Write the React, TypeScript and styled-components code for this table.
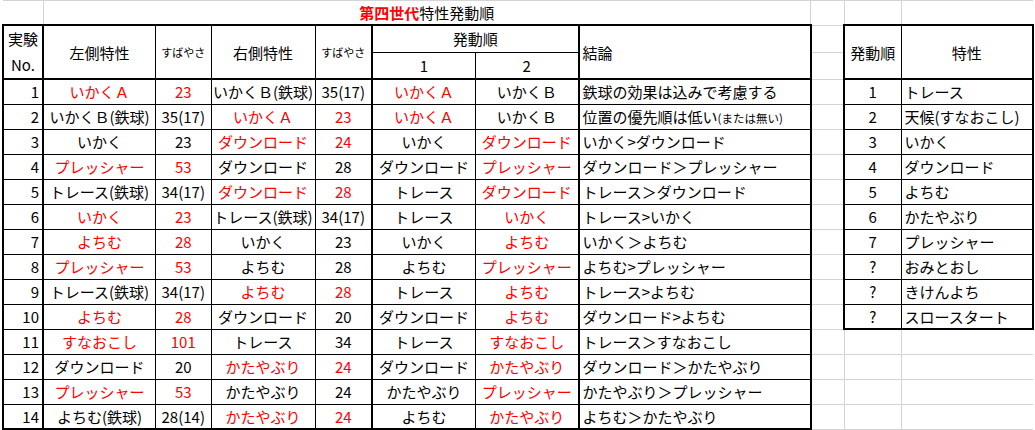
import React from "react";
import styled, { createGlobalStyle } from "styled-components";

const GlobalStyle = createGlobalStyle`
  html, body {
    margin: 0;
    padding: 0;
    background: #ffffff;
  }
  body {
    font-family: "Noto Sans CJK JP", "Noto Sans", sans-serif;
    color: #000000;
  }
`;

type Edge = "thick" | "thin" | "grid" | "none";

const edge = (e: Edge = "thin") => {
  if (e === "thick") return "2px solid #000000";
  if (e === "grid") return "1px solid #d4d4d4";
  if (e === "none") return "none";
  return "1px solid #000000";
};

const Sheet = styled.table`
  border-collapse: collapse;
  table-layout: fixed;
  margin: 0 0 0 2px;
`;

const Row = styled.tr<{ $h: number }>`
  height: ${(p) => p.$h}px;
`;

const Cell = styled.td<{
  $t?: Edge;
  $r?: Edge;
  $b?: Edge;
  $l?: Edge;
  $align?: "left" | "center" | "right";
  $red?: boolean;
  $small?: boolean;
}>`
  padding: 0 ${(p) => (p.$align === "right" ? "3px" : "1px")} 0
    ${(p) => (p.$align === "left" ? "3px" : "1px")};
  border-top: ${(p) => edge(p.$t)};
  border-right: ${(p) => edge(p.$r)};
  border-bottom: ${(p) => edge(p.$b)};
  border-left: ${(p) => edge(p.$l)};
  text-align: ${(p) => p.$align ?? "center"};
  vertical-align: middle;
  color: ${(p) => (p.$red ? "#ff0000" : "#000000")};
  font-size: ${(p) => (p.$small ? "11px" : "15px")};
  line-height: 1;
  white-space: nowrap;
`;

const TwoLine = styled.div`
  line-height: 26px;
`;

const Title = styled.span`
  font-size: 15px;
  color: #000000;
`;

const TitleRed = styled.b`
  color: #ff0000;
  font-weight: 700;
`;

const Note = styled.span`
  font-size: 11.5px;
`;

// "*" prefix = red text
const rows: string[][] = [
  ["1", "*いかくＡ", "*23", "いかくＢ(鉄球)", "35(17)", "*いかくＡ", "いかくＢ", "鉄球の効果は込みで考慮する"],
  ["2", "いかくＢ(鉄球)", "35(17)", "*いかくＡ", "*23", "*いかくＡ", "いかくＢ", "位置の優先順は低い"],
  ["3", "いかく", "23", "*ダウンロード", "*24", "いかく", "*ダウンロード", "いかく>ダウンロード"],
  ["4", "*プレッシャー", "*53", "ダウンロード", "28", "ダウンロード", "*プレッシャー", "ダウンロード＞プレッシャー"],
  ["5", "トレース(鉄球)", "34(17)", "*ダウンロード", "*28", "トレース", "*ダウンロード", "トレース＞ダウンロード"],
  ["6", "*いかく", "*23", "トレース(鉄球)", "34(17)", "トレース", "*いかく", "トレース>いかく"],
  ["7", "*よちむ", "*28", "いかく", "23", "いかく", "*よちむ", "いかく＞よちむ"],
  ["8", "*プレッシャー", "*53", "よちむ", "28", "よちむ", "*プレッシャー", "よちむ>プレッシャー"],
  ["9", "トレース(鉄球)", "34(17)", "*よちむ", "*28", "トレース", "*よちむ", "トレース>よちむ"],
  ["10", "*よちむ", "*28", "ダウンロード", "20", "ダウンロード", "*よちむ", "ダウンロード>よちむ"],
  ["11", "*すなおこし", "*101", "トレース", "34", "トレース", "*すなおこし", "トレース＞すなおこし"],
  ["12", "ダウンロード", "20", "*かたやぶり", "*24", "ダウンロード", "*かたやぶり", "ダウンロード＞かたやぶり"],
  ["13", "*プレッシャー", "*53", "かたやぶり", "24", "かたやぶり", "*プレッシャー", "かたやぶり＞プレッシャー"],
  ["14", "よちむ(鉄球)", "28(14)", "*かたやぶり", "*24", "よちむ", "*かたやぶり", "よちむ＞かたやぶり"],
];

const order: [string, string][] = [
  ["1", "トレース"],
  ["2", "天候(すなおこし)"],
  ["3", "いかく"],
  ["4", "ダウンロード"],
  ["5", "よちむ"],
  ["6", "かたやぶり"],
  ["7", "プレッシャー"],
  ["?", "おみとおし"],
  ["?", "きけんよち"],
  ["?", "スロースタート"],
];

const widths = [40, 112.5, 55.5, 104, 57, 103.5, 103, 232, 33.5, 57, 132];

const txt = (s: string) => (s.startsWith("*") ? s.slice(1) : s);
const red = (s: string) => s.startsWith("*");

export default function App() {
  return (
    <>
      <GlobalStyle />
      <Sheet>
        <colgroup>
          {widths.map((w, i) => (
            <col key={i} style={{ width: w }} />
          ))}
        </colgroup>
        <tbody>
          <Row $h={24.5}>
            <Cell $t="grid" $l="none" $r="grid" $b="grid" />
            <Cell colSpan={7} $t="grid" $r="grid" $b="grid" $l="grid">
              <Title>
                <TitleRed>第四世代</TitleRed>特性発動順
              </Title>
            </Cell>
            <Cell $t="grid" $r="grid" $b="grid" $l="grid" />
            <Cell $t="grid" $r="grid" $b="grid" $l="grid" />
            <Cell $t="grid" $r="none" $b="grid" $l="grid" />
          </Row>
          <Row $h={26}>
            <Cell rowSpan={2} $t="thick" $l="thick" $r="thick" $b="thick">
              <TwoLine>
                実験
                <br />
                No.
              </TwoLine>
            </Cell>
            <Cell rowSpan={2} $t="thick" $b="thick">左側特性</Cell>
            <Cell rowSpan={2} $t="thick" $b="thick" $small>すばやさ</Cell>
            <Cell rowSpan={2} $t="thick" $b="thick">右側特性</Cell>
            <Cell rowSpan={2} $t="thick" $b="thick" $r="thick" $small>すばやさ</Cell>
            <Cell colSpan={2} $t="thick" $r="thick">発動順</Cell>
            <Cell rowSpan={2} $t="thick" $b="thick" $r="thick" $align="left">結論</Cell>
            <Cell $t="grid" $r="grid" $b="grid" $l="grid" />
            <Cell rowSpan={2} $t="thick" $l="thick" $b="thick">発動順</Cell>
            <Cell rowSpan={2} $t="thick" $r="thick" $b="thick">特性</Cell>
          </Row>
          <Row $h={26}>
            <Cell $b="thick">1</Cell>
            <Cell $b="thick" $r="thick">2</Cell>
            <Cell $t="grid" $r="grid" $b="grid" $l="grid" />
          </Row>
          {rows.map((r, i) => {
            const last = i === rows.length - 1;
            const b: Edge = last ? "thick" : "thin";
            const o = order[i];
            const ob: Edge = i === order.length - 1 ? "thick" : "thin";
            return (
              <Row $h={25} key={i}>
                <Cell $align="right" $l="thick" $r="thick" $b={b}>
                  {r[0]}
                </Cell>
                {r.slice(1, 7).map((c, j) => (
                  <Cell
                    key={j}
                    $red={red(c)}
                    $b={b}
                    $r={j === 3 || j === 5 ? "thick" : "thin"}
                  >
                    {txt(c)}
                  </Cell>
                ))}
                <Cell $align="left" $r="thick" $b={b}>
                  {r[7]}
                  {i === 1 && <Note>(または無い)</Note>}
                </Cell>
                <Cell $t="grid" $r="grid" $b="grid" $l="grid" />
                {o ? (
                  <>
                    <Cell $l="thick" $b={ob}>
                      {o[0]}
                    </Cell>
                    <Cell $r="thick" $b={ob} $align="left">
                      {o[1]}
                    </Cell>
                  </>
                ) : (
                  <>
                    <Cell $t="grid" $r="grid" $b="grid" $l="grid" />
                    <Cell $t="grid" $r="none" $b="grid" $l="grid" />
                  </>
                )}
              </Row>
            );
          })}
        </tbody>
      </Sheet>
    </>
  );
}
